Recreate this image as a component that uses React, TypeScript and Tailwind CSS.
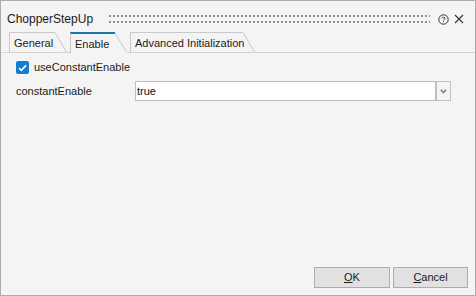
import React from "react";

function Tab({ label, width, active }: { label: string; width: number; active?: boolean }) {
  return (
    <div className={`relative flex ${active ? "-mb-px h-[21px] self-end" : "h-[20px] self-end"}`}>
      <div
        className={`flex items-center pl-[4px] border-l border-[#c9c9c9] overflow-visible ${
          active ? "border-t-2 border-t-[#1f76a8] bg-[#f4f4f4]" : "border-t border-t-[#c9c9c9]"
        }`}
        style={{ width }}
      >
        <span className="text-[11px] leading-none text-[#1b1b1b] mt-[1px] whitespace-nowrap">{label}</span>
      </div>
      <svg width="12" height={active ? 21 : 20} className="block">
        {active && <polygon points="0,0 12,20 12,21 0,21" fill="#f4f4f4" />}
        <line x1="0" y1={active ? 1 : 0.5} x2="11.5" y2="20" stroke="#c9c9c9" strokeWidth="1" />
      </svg>
    </div>
  );
}

export default function App() {
  return (
    <div
      className="w-[476px] h-[296px] border border-[#ababab] bg-[#f4f4f4] flex flex-col text-[#1b1b1b]"
      style={{ fontFamily: '"Liberation Sans", Arial, sans-serif' }}
    >
      {/* Title row */}
      <div className="mt-[9px] h-[18px] flex items-center pl-[6px] pr-[11px]">
        <span className="text-[12px] leading-none text-[#1b1b1b]">ChopperStepUp</span>
        <div className="flex-1 ml-[16px] mr-[8px] h-[8px]">
          <svg width="100%" height="8" className="block">
            <defs>
              <pattern id="grip" width="4" height="8" patternUnits="userSpaceOnUse">
                <rect x="0" y="0" width="2" height="2" fill="#8f8f8f" />
                <rect x="0" y="6" width="2" height="2" fill="#8f8f8f" />
              </pattern>
            </defs>
            <rect x="0" y="0" width="100%" height="8" fill="url(#grip)" />
          </svg>
        </div>
        <svg width="11" height="11" viewBox="0 0 11 11" className="block">
          <circle cx="5.5" cy="5.5" r="4.7" fill="none" stroke="#333" strokeWidth="1" />
          <path d="M3.9 4.3 C3.9 2.9 7.1 2.9 7.1 4.3 C7.1 5.3 5.5 5.3 5.5 6.4" fill="none" stroke="#333" strokeWidth="1" />
          <rect x="5" y="7.3" width="1" height="1" fill="#333" />
        </svg>
        <svg width="10" height="10" viewBox="0 0 10 10" className="block ml-[5px]">
          <path d="M1 1 L9 9 M9 1 L1 9" stroke="#333" strokeWidth="1.1" />
        </svg>
      </div>

      {/* Tab row */}
      <div className="mt-[4px] h-[21px] flex items-end pl-[8px] border-b border-[#d4d4d4]">
        <Tab label="General" width={46} />
        <div className="w-[3px]" />
        <div className="-mt-px">
          <Tab label="Enable" width={45} active />
        </div>
        <div className="w-[3px]" />
        <Tab label="Advanced Initialization" width={113} />
      </div>

      {/* Content */}
      <div className="flex-1 flex flex-col pl-[15px] pt-[8px]">
        <div className="h-[13px] flex items-center gap-[5px]">
          <div className="w-[13px] h-[13px] rounded-[2px] bg-[#0f7fd4] flex items-center justify-center">
            <svg width="9" height="8" viewBox="0 0 9 8">
              <path d="M1 4.2 L3.4 6.4 L8 1.4" fill="none" stroke="#fff" strokeWidth="1.6" />
            </svg>
          </div>
          <span className="text-[11px] leading-none">useConstantEnable</span>
        </div>
        <div className="mt-[7px] h-[20px] flex items-center">
          <span className="w-[119px] text-[11px] leading-none">constantEnable</span>
          <div className="w-[301px] h-[20px] border border-[#bcbcbc] bg-white flex items-center pl-[1px]">
            <span className="text-[11px] leading-none text-[#111]">true</span>
          </div>
          <div className="w-[15px] h-[20px] border border-[#c3c3c3] bg-[#f4f4f4] flex items-center justify-center">
            <svg width="7" height="5" viewBox="0 0 7 5">
              <path d="M0.8 0.8 L3.5 3.6 L6.2 0.8" fill="none" stroke="#808080" strokeWidth="1.5" />
            </svg>
          </div>
        </div>
      </div>

      {/* Footer */}
      <div className="flex justify-end gap-[3px] pr-[7px] pb-[7px]">
        <button className="w-[76px] h-[21px] border border-[#adadad] bg-[#e1e1e1] text-[11px] leading-none text-[#1b1b1b] flex items-center justify-center">
          <span><span className="underline">O</span>K</span>
        </button>
        <button className="w-[75px] h-[21px] border border-[#adadad] bg-[#e1e1e1] text-[11px] leading-none text-[#1b1b1b] flex items-center justify-center">
          <span><span className="underline">C</span>ancel</span>
        </button>
      </div>
    </div>
  );
}
